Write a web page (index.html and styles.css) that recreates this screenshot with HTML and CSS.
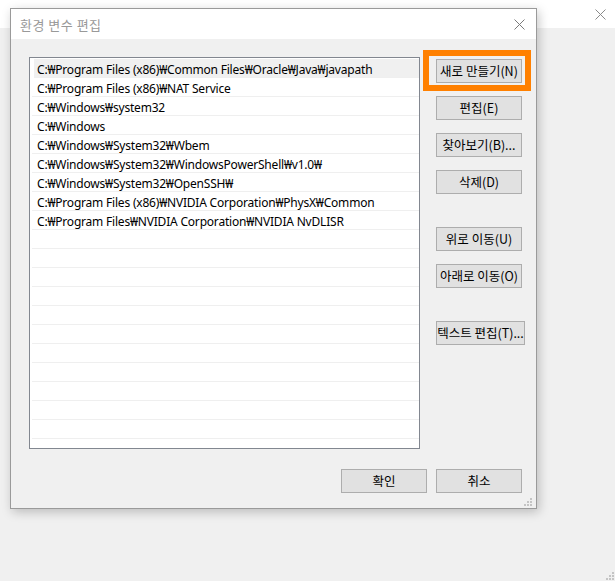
FILE: index.html
```html
<!DOCTYPE html>
<html>
<head>
    <title>환경 변수 편집</title>
    <link rel="stylesheet" href="styles.css">
</head>
<body>
    <div class="back-titlebar">
        <span class="close-x back-close">
            <svg width="11" height="11" viewBox="0 0 11 11" fill="none" stroke="#8a8a8a" stroke-width="1">
                <path d="M0.5 0.5L10.5 10.5"></path>
                <path d="M10.5 0.5L0.5 10.5"></path>
            </svg>
        </span>
    </div>

    <div class="dialog">
        <div class="titlebar">
            <span class="title">환경 변수 편집</span>
            <span class="close-x">
                <svg width="11" height="11" viewBox="0 0 11 11" fill="none" stroke="#7a7a7a" stroke-width="1">
                    <path d="M0.5 0.5L10.5 10.5"></path>
                    <path d="M10.5 0.5L0.5 10.5"></path>
                </svg>
            </span>
        </div>

        <div class="dialog-body">
            <div class="main-row">
                <div class="path-list">
                    <div class="path-row selected">C:₩Program Files (x86)₩Common Files₩Oracle₩Java₩javapath</div>
                    <div class="path-row">C:₩Program Files (x86)₩NAT Service</div>
                    <div class="path-row">C:₩Windows₩system32</div>
                    <div class="path-row">C:₩Windows</div>
                    <div class="path-row">C:₩Windows₩System32₩Wbem</div>
                    <div class="path-row">C:₩Windows₩System32₩WindowsPowerShell₩v1.0₩</div>
                    <div class="path-row">C:₩Windows₩System32₩OpenSSH₩</div>
                    <div class="path-row">C:₩Program Files (x86)₩NVIDIA Corporation₩PhysX₩Common</div>
                    <div class="path-row">C:₩Program Files₩NVIDIA Corporation₩NVIDIA NvDLISR</div>
                    <div class="path-row"></div>
                    <div class="path-row"></div>
                    <div class="path-row"></div>
                    <div class="path-row"></div>
                    <div class="path-row"></div>
                    <div class="path-row"></div>
                    <div class="path-row"></div>
                    <div class="path-row"></div>
                    <div class="path-row"></div>
                    <div class="path-row"></div>
                    <div class="path-row"></div>
                    <div class="path-row"></div>
                </div>

                <div class="side-buttons">
                    <button class="btn highlighted">새로 만들기(N)</button>
                    <button class="btn">편집(E)</button>
                    <button class="btn">찾아보기(B)...</button>
                    <button class="btn">삭제(D)</button>
                    <button class="btn group-start">위로 이동(U)</button>
                    <button class="btn">아래로 이동(O)</button>
                    <button class="btn wide group-start">텍스트 편집(T)...</button>
                </div>
            </div>

            <div class="footer">
                <button class="btn">확인</button>
                <button class="btn">취소</button>
            </div>
        </div>

        <svg class="grip dialog-grip" width="8" height="8" viewBox="0 0 8 8" fill="#c4c4c4">
            <rect x="6" y="0" width="2" height="2"></rect>
            <rect x="3" y="3" width="2" height="2"></rect>
            <rect x="6" y="3" width="2" height="2"></rect>
            <rect x="0" y="6" width="2" height="2"></rect>
            <rect x="3" y="6" width="2" height="2"></rect>
            <rect x="6" y="6" width="2" height="2"></rect>
        </svg>
    </div>

    <svg class="grip page-grip" width="8" height="8" viewBox="0 0 8 8" fill="#c4c4c4">
        <rect x="6" y="0" width="2" height="2"></rect>
        <rect x="3" y="3" width="2" height="2"></rect>
        <rect x="6" y="3" width="2" height="2"></rect>
        <rect x="0" y="6" width="2" height="2"></rect>
        <rect x="3" y="6" width="2" height="2"></rect>
        <rect x="6" y="6" width="2" height="2"></rect>
    </svg>
</body>
</html>
```

FILE: styles.css
```css
body {
    font-family: "Noto Sans CJK KR", "Noto Sans", sans-serif;
    margin: 0;
    padding: 0;
    background-color: #f0f0f0;
    color: #000;
    height: 100vh;
    overflow: hidden;
    position: relative;
}

.back-titlebar {
    height: 28px;
    background-color: #fff;
    display: flex;
    justify-content: flex-end;
    align-items: center;
}
.back-close {
    margin-right: 9px;
}
.close-x {
    display: flex;
    align-items: center;
}

/* the edit dialog sits over the parent window */
.dialog {
    position: absolute;
    left: 10px;
    top: 8px;
    width: 525px;
    height: 499px;
    border: 1px solid #9a9a9a;
    background-color: #f0f0f0;
    box-shadow: 2px 3px 10px rgba(0, 0, 0, 0.22);
    display: flex;
    flex-direction: column;
}

.titlebar {
    height: 30px;
    background-color: #fff;
    display: flex;
    align-items: center;
    justify-content: space-between;
    padding: 0 11px 0 9px;
}
.title {
    font-size: 13px;
    color: #999;
    letter-spacing: 0.5px;
}

.dialog-body {
    padding: 18px 11px 0 18px;
}
.main-row {
    display: flex;
    align-items: flex-start;
}

.path-list {
    flex-shrink: 0;
    width: 389px;
    height: 389px;
    border: 1px solid #828790;
    background-color: #fff;
    overflow: hidden;
    padding-top: 1px;
    box-sizing: content-box;
}
.path-row {
    height: 18px;
    line-height: 21px;
    border-bottom: 1px solid #efefef;
    margin-left: 2px;
    padding-left: 5px;
    font-family: "Noto Sans", "Noto Sans CJK KR", sans-serif;
    font-size: 12px;
    letter-spacing: -0.2px;
    white-space: nowrap;
}
.path-row.selected {
    background-color: #f0f0f0;
    margin-left: 4px;
    padding-left: 3px;
}

.side-buttons {
    flex-shrink: 0;
    margin-left: 16px;
    margin-top: 2px;
    display: flex;
    flex-direction: column;
    align-items: flex-start;
    gap: 13px;
}
.side-buttons .group-start {
    margin-top: 20px;
}

.btn {
    width: 86px;
    height: 24px;
    background-color: #e1e1e1;
    border: 1px solid #adadad;
    border-radius: 0;
    padding: 0;
    font-family: "Noto Sans CJK KR", "Noto Sans", sans-serif;
    font-size: 12.5px;
    line-height: 20px;
    color: #000;
    white-space: nowrap;
}
.btn.wide {
    width: 89px;
}
.btn.highlighted {
    position: relative;
}
.btn.highlighted::after {
    content: "";
    position: absolute;
    left: -14px;
    top: -10px;
    right: -10px;
    bottom: -9px;
    border: 6px solid #ff8000;
    pointer-events: none;
}

.footer {
    display: flex;
    justify-content: flex-end;
    gap: 9px;
    margin-top: 20px;
    padding-right: 3px;
}

.grip {
    position: absolute;
}
.dialog-grip {
    right: 4px;
    bottom: 2px;
}
.page-grip {
    right: 1px;
    bottom: 1px;
}
```
